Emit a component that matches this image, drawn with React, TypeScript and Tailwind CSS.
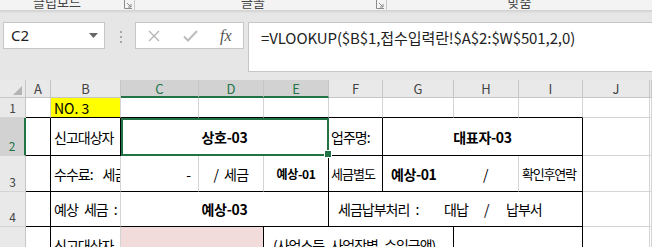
import React from "react";

type Edge = "g" | "k";

const KR = "font-['Noto_Sans_CJK_KR','Noto_Sans',sans-serif]";

function Cell({
  r = "g",
  b = "g",
  bg = "bg-white",
  size = "text-[14px]",
  className = "",
  children,
}: {
  r?: Edge;
  b?: Edge;
  bg?: string;
  size?: string;
  className?: string;
  children?: React.ReactNode;
}) {
  const rc = r === "k" ? "border-r-black" : "border-r-[#d4d4d4]";
  const bc = b === "k" ? "border-b-black" : "border-b-[#d4d4d4]";
  return (
    <div
      className={`relative flex items-center overflow-hidden whitespace-nowrap border-r border-b leading-none text-black ${size} ${rc} ${bc} ${bg} ${className}`}
    >
      {children}
    </div>
  );
}

function ColHead({ l, sel = false }: { l?: string; sel?: boolean }) {
  return (
    <div
      className={`flex items-center justify-center border-r border-r-[#c6c6c6] text-[13px] leading-none ${
        sel
          ? "border-b-2 border-b-[#217346] bg-[#d2d2d2] text-[#217346]"
          : "border-b border-b-[#c6c6c6] bg-[#e9e9e9] text-[#444]"
      }`}
    >
      {l}
    </div>
  );
}

function RowHead({ n, sel = false }: { n: number; sel?: boolean }) {
  return (
    <div
      className={`flex items-end justify-center border-b border-b-[#d4d4d4] pb-[3px] text-[12px] leading-none ${
        sel
          ? "border-r-2 border-r-[#217346] bg-[#d2d2d2] text-[#217346]"
          : "border-r border-r-[#c6c6c6] bg-[#e9e9e9] text-[#444]"
      }`}
    >
      {n}
    </div>
  );
}

function Launcher() {
  return (
    <svg width="12" height="10" viewBox="0 0 12 10" className="text-[#8a8a8a]">
      <path d="M1.5 0V8.5H9" fill="none" stroke="currentColor" strokeWidth="1" />
      <path d="M4 3L8 7M8 4V7H5" fill="none" stroke="currentColor" strokeWidth="1" />
      <path d="M11.5 0V10" stroke="#c8c8c8" strokeWidth="1" />
    </svg>
  );
}

export default function App() {
  return (
    <div className="h-[247px] w-[652px] overflow-hidden bg-[#e6e6e6] font-['Noto_Sans','Liberation_Sans',sans-serif]">
      {/* ribbon bottom edge */}
      <div
        className={`flex h-[11px] items-start overflow-hidden border-b border-b-[#d2d2d2] bg-[#f3f3f3] text-[13px] leading-[13px] text-[#444] shadow-[0_1px_2px_rgba(0,0,0,0.08)] ${KR}`}
      >
        <div className="mt-[-5px] w-[126px] text-center">클립보드</div>
        <div className="ml-[9px]">
          <Launcher />
        </div>
        <div className="mt-[-5px] w-[261px] text-center">글꼴</div>
        <div className="ml-[4px]">
          <Launcher />
        </div>
        <div className="mt-[-5px] w-[293px] text-center">맞춤</div>
      </div>

      {/* formula bar */}
      <div className="flex h-[69px] items-start pt-[11px]">
        <div className="ml-[3px] flex h-[27px] w-[102px] items-center justify-between border border-[#c6c6c6] bg-white pl-[7px] pr-[6px]">
          <span className="text-[15px] leading-none text-[#222]">C2</span>
          <svg width="9" height="5" viewBox="0 0 9 5">
            <path d="M0 0H9L4.5 5Z" fill="#666" />
          </svg>
        </div>
        <div className="ml-[14px] mt-[9px] flex w-[3px] flex-col items-center gap-[3px]">
          <span className="h-[2px] w-[2px] bg-[#a6a6a6]" />
          <span className="h-[2px] w-[2px] bg-[#a6a6a6]" />
          <span className="h-[2px] w-[2px] bg-[#a6a6a6]" />
        </div>
        <div className="ml-[13px] flex h-[27px] w-[109px] items-center border border-[#c6c6c6] bg-white pl-[12px]">
          <svg width="12" height="12" viewBox="0 0 12 12">
            <path d="M1 1L11 11M11 1L1 11" stroke="#b4b4b4" strokeWidth="1.3" />
          </svg>
          <svg width="15" height="12" viewBox="0 0 15 12" className="ml-[23px]">
            <path d="M1 6.5L5 10.5L14 1" fill="none" stroke="#bcbcbc" strokeWidth="2" />
          </svg>
          <span className="ml-[22px] font-['Liberation_Serif',serif] text-[16px] italic leading-none text-[#555]">
            fx
          </span>
        </div>
        <div
          className={`ml-[4px] h-[50px] flex-1 border border-r-0 border-[#c6c6c6] bg-white pl-[12px] pt-[5px] text-[15px] leading-[20px] tracking-[-0.1px] text-[#222] ${KR}`}
        >
          =VLOOKUP($B$1,접수입력란!$A$2:$W$501,2,0)
        </div>
      </div>

      {/* sheet grid */}
      <div
        className={`grid grid-cols-[26px_25px_70px_78px_65px_65px_54px_71px_65px_64px_67px_1fr] grid-rows-[18px_20px_38px_36px_35px_36px] bg-white ${KR}`}
      >
        {/* header row */}
        <div className="relative border-r border-b border-[#c6c6c6] bg-[#e9e9e9]">
          <svg width="9" height="9" viewBox="0 0 9 9" className="absolute bottom-[2px] right-[3px]">
            <path d="M9 0V9H0Z" fill="#b4b4b4" />
          </svg>
        </div>
        <ColHead l="A" />
        <ColHead l="B" />
        <ColHead l="C" sel />
        <ColHead l="D" sel />
        <ColHead l="E" sel />
        <ColHead l="F" />
        <ColHead l="G" />
        <ColHead l="H" />
        <ColHead l="I" />
        <ColHead l="J" />
        <ColHead />

        {/* row 1 */}
        <RowHead n={1} />
        <Cell b="k" />
        <Cell b="k" bg="bg-[#ffff00]" className="pl-[3px]">
          NO. 3
        </Cell>
        <Cell b="k" />
        <Cell b="k" />
        <Cell b="k" />
        <Cell b="k" />
        <Cell b="k" />
        <Cell b="k" />
        <Cell b="k" />
        <Cell />
        <Cell />

        {/* row 2 */}
        <RowHead n={2} sel />
        <Cell r="k" b="k" />
        <Cell r="k" b="k" className="pl-[3px] tracking-[-1px]">
          신고대상자
        </Cell>
        <Cell r="k" b="k" className="col-span-3 justify-center overflow-visible font-bold tracking-[-0.3px]">
          상호-03
          <div className="pointer-events-none absolute -bottom-px -right-px left-0 top-0 z-10 border-2 border-[#217346]" />
          <div className="absolute -bottom-[3px] -right-[4px] z-20 box-content h-[6px] w-[6px] border border-white bg-[#217346]" />
        </Cell>
        <Cell r="k" b="k" className="pl-[2px] tracking-[-1px]">
          업주명:
        </Cell>
        <Cell r="k" b="k" className="col-span-3 justify-center font-bold tracking-[-0.3px]">
          대표자-03
        </Cell>
        <Cell />
        <Cell />

        {/* row 3 */}
        <RowHead n={3} />
        <Cell r="k" b="k" />
        <Cell b="k" className="pl-[3px] tracking-[-1px]">
          <span>수수료:</span>
          <span className="ml-[10px]">세금</span>
        </Cell>
        <Cell b="k" className="justify-end pr-[7px]">
          -
        </Cell>
        <Cell b="k" className="justify-center tracking-[-0.6px] [word-spacing:3px]">
          / 세금
        </Cell>
        <Cell r="k" b="k" size="text-[12px]" className="justify-center font-bold tracking-[-0.3px]">
          예상-01
        </Cell>
        <Cell r="k" b="k" size="text-[13px]" className="pl-[2px] tracking-[-1px]">
          세금별도
        </Cell>
        <Cell b="k" className="col-span-2">
          <div className="w-[71px] pl-[8px] font-bold tracking-[-0.4px]">예상-01</div>
          <div className="w-[65px] text-center">/</div>
        </Cell>
        <Cell r="k" b="k" size="text-[13px]" className="pl-[3px] tracking-[-1.2px]">
          확인후연락
        </Cell>
        <Cell />
        <Cell />

        {/* row 4 */}
        <RowHead n={4} />
        <Cell r="k" b="k" />
        <Cell b="k" className="pl-[3px] tracking-[-1px] [word-spacing:4px]">
          예상 세금 :
        </Cell>
        <Cell r="k" b="k" className="col-span-3 justify-center font-bold tracking-[-0.3px]">
          예상-03
        </Cell>
        <Cell r="k" b="k" className="col-span-4 text-[#111] tracking-[-1px] [word-spacing:4px]">
          <div className="w-[115px] pl-[9px]">세금납부처리 :</div>
          <div className="w-[40px]">대납</div>
          <div className="w-[22px]">/</div>
          <div>납부서</div>
        </Cell>
        <Cell />
        <Cell />

        {/* row 5 */}
        <RowHead n={5} />
        <Cell r="k" />
        <Cell className="pl-[3px] tracking-[-1px]">신고대상자</Cell>
        <Cell r="k" bg="bg-[#f2dcdb]" className="col-span-2" />
        <Cell r="k" className="col-span-3 pl-[9px] tracking-[-1px] [word-spacing:4px]">
          (사업소득 사업장별 수입금액)
        </Cell>
        <Cell r="k" className="col-span-2" />
        <Cell />
        <Cell />
      </div>
    </div>
  );
}
